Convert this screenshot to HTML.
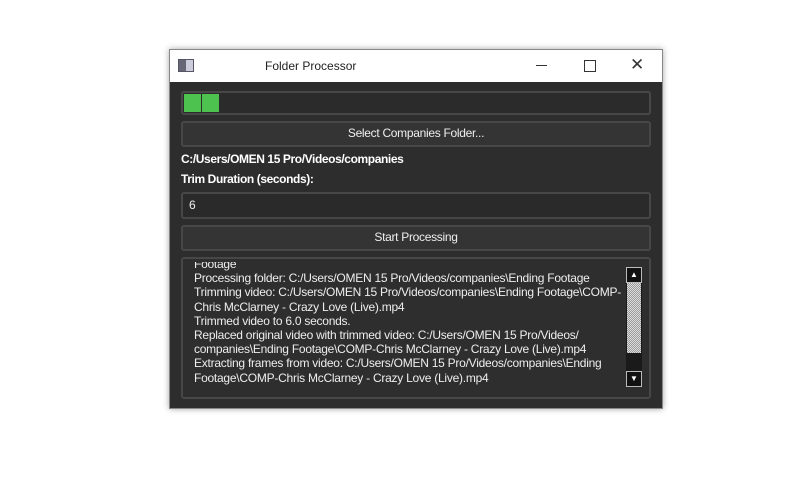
<!DOCTYPE html>
<html><head><style>
body{margin:0;width:800px;height:494px;background:#fff;position:relative;overflow:hidden;font-family:"Liberation Sans",sans-serif}
.win{position:absolute;left:169px;top:49px;width:494px;height:360px;background:#2d2d2d;box-shadow:0 0 6px rgba(0,0,0,.35);border:1px solid #888;box-sizing:border-box}
.tb{position:absolute;left:0;top:0;width:100%;height:32px;background:#fff;color:#222;font-size:12px}
.box{position:absolute;left:11px;width:470px;box-sizing:border-box;border:2px solid #474747;border-radius:3px;background:#2a2a2a;color:#eee;font-size:12px}
.btn{background:#343434;text-align:center;line-height:21px;letter-spacing:-0.3px}
.lbl{position:absolute;left:11px;color:#fff;font-weight:bold;font-size:12px;letter-spacing:-0.4px}
.log{line-height:14.2px;padding-left:11px;overflow:hidden}
.log .t{white-space:nowrap;letter-spacing:-0.25px;font-size:12px}
</style></head><body>
<div class="win">
 <div class="tb">
  <div style="position:absolute;left:8px;top:9px;width:14px;height:11px;border:1px solid #556;background:linear-gradient(90deg,#667 50%,#ccd 50%)"></div>
  <div style="position:absolute;left:95px;top:9px">Folder Processor</div>
  <div style="position:absolute;left:366px;top:15px;width:11px;height:1px;background:#333"></div>
  <div style="position:absolute;left:414px;top:10px;width:10px;height:10px;border:1px solid #333"></div>
  <div style="position:absolute;left:460px;top:5px;font-size:17px;color:#333">✕</div>
 </div>
 <div class="box" style="top:41px;height:24px;background:#2b2b2b">
  <div style="position:absolute;left:1px;top:1px;width:17px;height:18px;background:#4ec24e"></div>
  <div style="position:absolute;left:19px;top:1px;width:17px;height:18px;background:#4ec24e"></div>
 </div>
 <div class="box btn" style="top:71px;height:26px">Select Companies Folder...</div>
 <div class="lbl" style="top:102px">C:/Users/OMEN 15 Pro/Videos/companies</div>
 <div class="lbl" style="top:122px">Trim Duration (seconds):</div>
 <div class="box" style="top:142px;height:27px;line-height:23px;padding-left:6px">6</div>
 <div class="box btn" style="top:175px;height:26px">Start Processing</div>
 <div class="box log" style="top:207px;height:142px;background:#2e2e2e">
  <div style="position:absolute;left:11px;top:3px;width:430px;height:130px;overflow:hidden">
  <div class="t" style="margin-top:-5px">Footage<br>Processing folder: C:/Users/OMEN 15 Pro/Videos/companies\Ending Footage<br>Trimming video: C:/Users/OMEN 15 Pro/Videos/companies\Ending Footage\COMP-<br>Chris McClarney - Crazy Love (Live).mp4<br>Trimmed video to 6.0 seconds.<br>Replaced original video with trimmed video: C:/Users/OMEN 15 Pro/Videos/<br>companies\Ending Footage\COMP-Chris McClarney - Crazy Love (Live).mp4<br>Extracting frames from video: C:/Users/OMEN 15 Pro/Videos/companies\Ending<br>Footage\COMP-Chris McClarney - Crazy Love (Live).mp4</div>
  </div>
  <div style="position:absolute;left:443px;top:8px;width:16px;height:120px;background:#1a1a1a">
   <div style="position:absolute;left:0;top:0;width:14px;height:14px;border:1px solid #bbb;background:#111;color:#fff;font-size:8px;text-align:center;line-height:14px">▲</div>
   <div style="position:absolute;left:1px;top:16px;width:14px;height:70px;background:repeating-conic-gradient(#999 0 25%,#ddd 0 50%) 0 0/2px 2px"></div>
   <div style="position:absolute;left:0;top:104px;width:14px;height:14px;border:1px solid #bbb;background:#111;color:#fff;font-size:8px;text-align:center;line-height:14px">▼</div>
  </div>
 </div>
</div>
</body></html>
